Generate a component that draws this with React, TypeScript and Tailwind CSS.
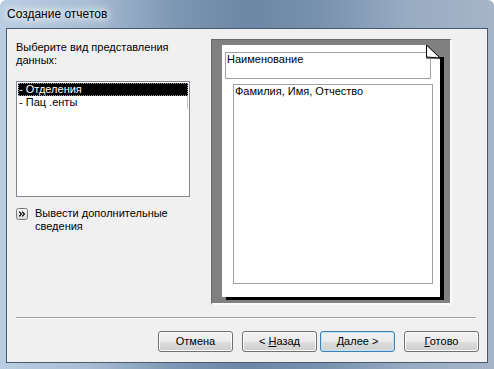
export default function App() {
  return (
    <div className="w-[494px] h-[369px] bg-white font-['Liberation_Sans',Arial,sans-serif] text-[11px] leading-[13px] text-black">
      <div className="w-full h-full flex flex-col rounded-t-[6px] bg-[linear-gradient(90deg,#b9cee3_0%,#a8bdd3_18%,#7e97b4_35%,#6c86a5_50%,#7891ae_65%,#97abc2_82%,#a6b5c8_100%)] px-[6px] pb-[6px]">
        {/* title */}
        <div className="h-[28px] flex items-center pl-[1px] text-[12px] [text-shadow:0_0_6px_#fff,0_0_10px_#fff,0_0_14px_#fff]">
          Создание отчетов
        </div>

        {/* client area */}
        <div className="flex-1 flex flex-col border border-[#4a5a6e] bg-[#f0f0f0] pl-[9px] pr-[8px] pt-[10px]">
          <div className="flex gap-[21px]">
            {/* left column */}
            <div className="w-[174px] flex flex-col">
              <div className="mt-[2px]">
                Выберите вид представления
                <br />
                данных:
              </div>
              <div className="mt-[14px] h-[116px] border border-[#828790] bg-white pt-[1px] px-[1px]">
                <div className="h-[13px] bg-black text-white pl-[1px] outline outline-1 outline-dotted outline-[#9a9a9a] -outline-offset-1">
                  - Отделения
                </div>
                <div className="h-[13px] pl-[1px] flex">
                  <span className="flex-1">- Пац .енты</span>
                  <span className="w-[1px] bg-[#c8c8c8]" />
                </div>
              </div>
              <div className="mt-[10px] flex gap-[7px]">
                <svg width="12" height="12" viewBox="0 0 12 12" className="mt-[1px] shrink-0">
                  <defs>
                    <linearGradient id="bg" x1="0" y1="0" x2="0" y2="1">
                      <stop offset="0" stopColor="#fafafa" />
                      <stop offset="1" stopColor="#d8d8d8" />
                    </linearGradient>
                  </defs>
                  <rect x="0.5" y="0.5" width="11" height="11" rx="2" fill="url(#bg)" stroke="#7a7a7a" />
                  <path d="M3.2 3.6 L5.4 6 L3.2 8.4 M6.2 3.6 L8.4 6 L6.2 8.4" fill="none" stroke="#000" strokeWidth="1.2" />
                </svg>
                <div>
                  Вывести дополнительные
                  <br />
                  сведения
                </div>
              </div>
            </div>

            {/* preview */}
            <div className="w-[241px] h-[266px] border-l border-t border-[#6a6a6a] border-r-2 border-b-2 border-r-[#fafafa] border-b-[#fafafa] bg-[#808080] pl-[10px] pt-[5px]">
              <div className="relative w-[218px] h-[252px] bg-white shadow-[4px_3px_0_#000] flex flex-col">
                <div className="ml-[3px] mt-[7px] w-[206px] h-[27px] border border-[#a0a0a0] pl-[1px]">
                  Наименование
                </div>
                <div className="ml-[11px] mt-[5px] w-[200px] h-[200px] border border-[#a0a0a0] pl-[1px]">
                  Фамилия, Имя, Отчество
                </div>
                <svg width="18" height="14" viewBox="0 0 18 14" className="absolute top-0 right-[-4px]">
                  <rect x="0" y="0" width="18" height="14" fill="#808080" />
                  <rect x="14" y="12" width="4" height="2" fill="#000" />
                  <polygon points="0,0 0,12 14,13" fill="#fff" />
                  <path d="M0.5 0 L0.5 12 L14 13 Z" fill="none" stroke="#000" strokeWidth="1" />
                </svg>
              </div>
            </div>
          </div>

          {/* separator */}
          <div className="mt-[12px] mr-[3px] border-t border-[#a0a0a0] border-b border-b-white" />

          {/* buttons */}
          <div className="mt-[12px] flex justify-end">
            <Btn label={<>Отмена</>} />
            <Btn className="ml-[9px]" label={<>&lt; <u>Н</u>азад</>} />
            <Btn className="ml-[3px]" primary label={<><u>Д</u>алее &gt;</>} />
            <Btn className="ml-[9px]" label={<><u>Г</u>отово</>} />
          </div>
        </div>
      </div>
    </div>
  );
}

function Btn({ label, primary, className = "" }: { label: React.ReactNode; primary?: boolean; className?: string }) {
  return (
    <div
      className={`w-[75px] h-[21px] rounded-[3px] border flex items-center justify-center bg-[linear-gradient(#f2f2f2_0%,#ebebeb_50%,#dddddd_51%,#cfcfcf_100%)] ${
        primary
          ? "border-[#3c7fb1] shadow-[inset_0_0_0_1px_#bfe3f7,inset_0_0_2px_1px_#d8eefa]"
          : "border-[#707070] shadow-[inset_0_0_0_1px_#fcfcfc]"
      } ${className}`}
    >
      <span className="[&_u]:underline-offset-1">{label}</span>
    </div>
  );
}
